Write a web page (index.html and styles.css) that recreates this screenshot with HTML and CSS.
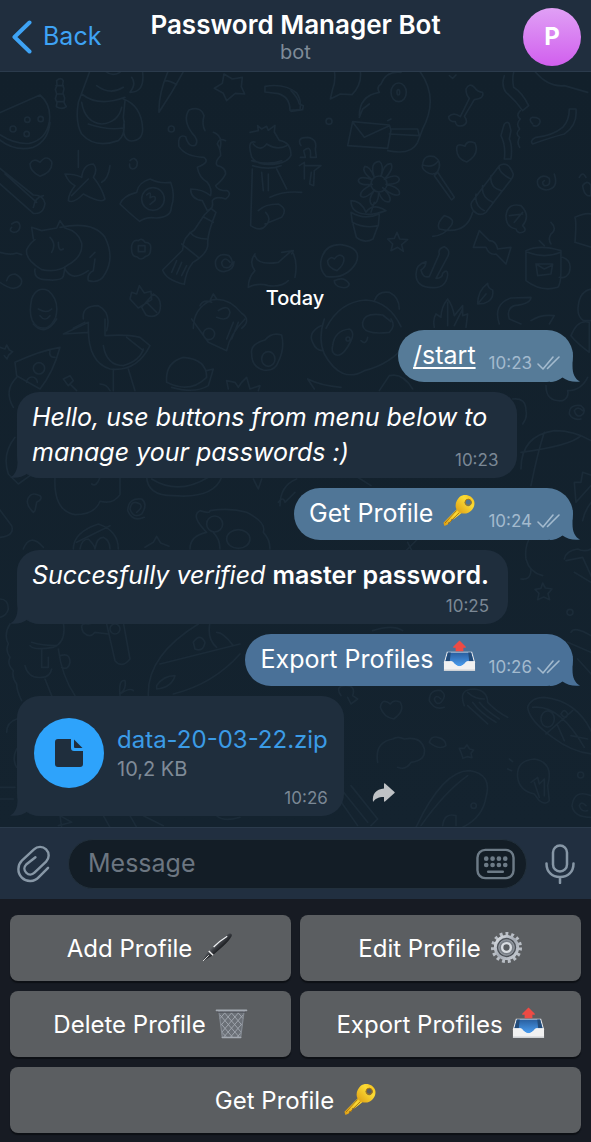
FILE: index.html
```html
<!DOCTYPE html>
<html lang="en">
<head>
<meta charset="utf-8">
<meta name="viewport" content="width=device-width, initial-scale=1">
<title>Password Manager Bot</title>
<link rel="stylesheet" href="styles.css">
</head>
<body>
<svg class="sprites" aria-hidden="true">
  <defs>
    <linearGradient id="gold" x1="1" y1="0" x2="0" y2="1"><stop offset="0" stop-color="#f5b912"/><stop offset=".35" stop-color="#fcdc35"/><stop offset="1" stop-color="#dc9a12"/></linearGradient>
    <linearGradient id="blue" x1="0" y1="0" x2="0" y2="1"><stop offset="0" stop-color="#2a5f9f"/><stop offset="1" stop-color="#4a9df0"/></linearGradient>
    <linearGradient id="steel" x1="0" y1="0" x2="1" y2="1"><stop offset="0" stop-color="#dfe3e8"/><stop offset=".5" stop-color="#a3a9b2"/><stop offset="1" stop-color="#c9ced5"/></linearGradient>
    <linearGradient id="ink" x1="0" y1="0" x2="1" y2="1"><stop offset=".3" stop-color="#8d9095"/><stop offset=".48" stop-color="#3a3d42"/><stop offset=".6" stop-color="#141619"/></linearGradient>
    <symbol id="key" viewBox="0 0 34 34">
      <path d="M16 15 1.500 29.500 2.500 33 6 31.500 6.500 29 9 29 9.500 26 12 26 21 19Z" fill="url(#gold)"/>
      <path d="M15 17 3 30M18 19 6 31" stroke="#a8700c" stroke-width="1"/>
      <path fill-rule="evenodd" d="M18 3C23-1 31 1 33 7c2 6-3 12-8 13-6 1-11-3-11-8 0-4 2-7 4-9Zm6.500 3.500a3.500 3.500 0 1 0 5 0 3.500 3.500 0 0 0-5 0Z" fill="url(#gold)"/>
      <circle cx="27" cy="8.500" r="3.200" fill="none" stroke="#b27a0c" stroke-width="1"/>
    </symbol>
    <symbol id="tray" viewBox="0 0 34 34">
      <path d="M4 12h26l3 11v9H1v-9Z" fill="#e9eaec"/>
      <path d="M5 13h24l2.500 9H25c-2 0-3 5-8 5s-6-5-8-5H2.500Z" fill="url(#blue)"/>
      <path d="M5 13h3l-1 9H2.500ZM29 13h-3l1 9h4.500Z" fill="#234b78"/>
      <path d="M1 22h7c3 0 4 5 9 5s6-5 9-5h7v10H1Z" fill="#f1f1f1"/>
      <path d="M1 30.500h32V32H1Z" fill="#cfd2d6"/>
      <path d="M17 .500 23.500 7q.5 1-.5 1H21v3.500h-8V8h-2q-1 0-.5-1Z" fill="#ee4b44"/>
    </symbol>
    <symbol id="pen" viewBox="0 0 34 34">
      <path d="M1.500 31.500 6 23C12 16 21 7 28 3c3-1.500 4.500.5 3.500 2.500-3 6-13 14-20 20Z" fill="url(#ink)"/>
      <path d="M8 20.500 12.500 25" stroke="#eee" stroke-width="1.500"/>
      <path d="m2 31 6-6" stroke="#ddd" stroke-width="1"/>
      <path d="M13 16.500C18 11.500 23 8 27 5.500" fill="none" stroke="#eef0f2" stroke-width="1.300"/>
    </symbol>
    <symbol id="gear" viewBox="0 0 34 34">
      <circle cx="17" cy="17" r="14" fill="none" stroke="#b9bec5" stroke-width="4" stroke-dasharray="2.900 2.965"/>
      <circle cx="17" cy="17" r="11.500" fill="#4c5158" stroke="url(#steel)" stroke-width="3"/>
      <circle cx="17" cy="17" r="8" fill="#7a8088" stroke="#9da3ab" stroke-width="1"/>
      <circle cx="17" cy="17" r="4.500" fill="#595d61" stroke="#d9dde2" stroke-width="2.500"/>
    </symbol>
    <symbol id="bin" viewBox="0 0 34 34">
      <path d="M4 4h26l-3.500 27q-9.500 2-19 0Z" fill="#6b7077"/>
      <path d="m5 8 20 23M9 5l18 21M16 5l12 14M23 5l6 7M6 17l12 14M7 26l5 5M29 8 9 31M25 5 7 26M18 5 6 19M11 5l-6 7M28 17 16 31M27 26l-4 5" stroke="#a4aab2" stroke-width=".9"/>
      <path d="M4 4 7.500 31M30 4l-3.500 27" stroke="#858b93" stroke-width="1.200"/>
      <path d="M1.500 3.500h31M7.500 31.500h19" stroke="#a3a9b1" stroke-width="1.600" stroke-linecap="round"/>
      <path d="M2 5.500h30" stroke="#50545b" stroke-width="1"/>
    </symbol>
    <symbol id="ticks" viewBox="0 0 23 14">
      <path d="m1 8 5 5L16 1M10.500 12.500 22 1" fill="none" stroke="currentColor" stroke-width="1.600" stroke-linecap="round" stroke-linejoin="round"/>
    </symbol>
    <symbol id="tail" viewBox="0 0 30 30">
      <path d="M22.500 0v14c0 8 2.500 13 7.500 15.500-6 1-13-.5-17.500-4C8 28.500 4 30 0 30V0Z" fill="currentColor"/>
    </symbol>
  </defs>
</svg>

<div class="app">
  <header class="topbar">
    <button class="back" type="button">
      <svg class="back-icon" viewBox="0 0 20 34" aria-hidden="true"><path d="M17.500 2.500 2.500 17l15 14.500" fill="none" stroke="currentColor" stroke-width="4" stroke-linecap="round" stroke-linejoin="round"/></svg>
      Back
    </button>
    <div class="peer">
      <h1 class="peer-name">Password Manager Bot</h1>
      <p class="peer-status">bot</p>
    </div>
    <button class="avatar" type="button" aria-label="Open profile">P</button>
  </header>

  <main class="chat">
    <svg class="wallpaper" viewBox="0 72 591 756" preserveAspectRatio="xMidYMax slice" aria-hidden="true">
      <g transform="translate(0 70) scale(.3333)">
        <path d="M-20 140 120 78q35 30 28 80-10 55-60 65-50 5-108-40M-10 205q50 45 110 30 45-20 50-75M30 180a9 9 0 1 0 18 0 9 9 0 1 0-18 0M72 195a8 8 0 1 0 16 0 8 8 0 1 0-16 0M74 152a8 8 0 1 0 16 0 8 8 0 1 0-16 0M114 150a8 8 0 1 0 16 0 8 8 0 1 0-16 0"/>
        <path d="M170 35q12-12 20 0l-2 12 4 12-3 14 5 14-2 14 7 12q-12 10-30 0l2-12-5-12 4-14-4-14 5-12ZM168 50h22M170 75h20M170 98h22"/>
        <path d="M270 5 235 100q-10 60 10 95 40 45 110 20 25-20 15-70l5-50M245 75q50 40 130 10M245 100q10 60 60 65 50-5 60-50M370 90q55 20 58 90 0 35-35 36-30-5-20-60M265 165q60 20 105 12M290 50q40 30 80 5M395 25q15 20-5 45 45 0 38-60M315 5q20 20 45 5"/>
        <path d="M505 5q-30 70-28 125 40-60 72-120M495 35q15 0 35 12M680 95l-10-22-27-15 24-15 5-28 25 15 30-5-3 28 10 22-28-2ZM795 52q60-10 95 20 15 20 10 50l-30 2q0-40-35-50l-40-5Z"/>
        <path d="M615 185q-10-20-3-45-10-30-45-17-20 30 10 70 20 20 10 35-20 10-30-25-25-10-20 30 20 30 75 32 20 15-20 30 5 30 30 45 15 20 10 40-25-20-60-20 0 30 35 35l15 30q20-5 15-30 10-15 40-5 20-15 5-25-30 0-35-15 20-15 30-35 0-20-25-25-10-10 10-30 0-20-10-35 5-20 25-10M640 190q30 10 20 50"/>
        <path d="M505 180a9 9 0 1 0 18 0 9 9 0 1 0-18 0M90 285q10-20 30-5 20-25 35-2 5 30-35 44-30-15-30-37ZM0 298l100 80q30 0 35 25-5 35-35 30L-5 340M15 315l95 85M100 415q5-30 30-35M235 245v50M195 315q30 0 50 10 5-40 35-40 15 15 0 40 25 30 35 65-10 15-65-15-30 30-45 20 0-20 20-45-20-10-30-35ZM330 290q-5 40-25 50M215 380l50-50"/>
        <path d="M390 275q15-15 22 5 0 20-15 20-10-2-8-15M360 405q10-25 50-35 5-30 40-40 30 15 62 10 15 40 2 75 0 30-45 32-30-5-50 10-20-15-59-52ZM425 390a34 34 0 1 0 68 0 34 34 0 1 0-68 0M440 378q15-15 10 8 20-10 15 8l-15 12"/>
        <path d="M100 510l-5-35 30 10 45-8 10-22 15 22q40 10 50 45 5 40-40 65-30 25-80 15-50-30-45-60 10-20 25-30M180 475q100-20 135 30 30 60 0 110-15 30-50 20-5-20 15-30l5-35M195 600q20 40 70 5M105 600q-5 30 30 32 50 5 55-10l5-25M150 505q20 20 5 45M175 520q0 30 15 20M270 565l15-15"/>
        <path d="M35 465q20-15 25 5 0 20-20 20-15-5-5-15M395 530q5-20 20-15 10-10 20 5 20 0 17 20 0 20-15 22-15 15-25 2-20 0-17-34ZM415 530h20v18h-20ZM648 430l-15-12-20 20-30 45q-35 20-35 60l-60 60q10 30 65 43 5-40 25-65 50-30 45-60 0-30 25-91ZM612 445l28 15M570 490q15 20 50 20M545 525l50 40M530 575l-15 35M545 580l-15 35M560 590l-15 30"/>
        <path d="M690 580q-15-20-25 0 0 20 22 15 20-15 0-35-30-10-40 15-5 30 25 33 30-5 30-30M0 550q30 10 50 2l15 5M0 640q40 30 60 10 15-20-15-35-20 0-25 20M95 690q15-40 50-25 35 30 22 80-20 45-55 28-30-20-17-83ZM115 720q25 15 40 0M120 740q15 20 30 0M250 750q-5-40 45-40 40 20 25 75M220 778l35-18M390 690l5-20 15 5 8-25 15 22 20-5 2 25-40 25ZM425 715l35-40q30 15 18 55-15 20-40 8ZM440 700l30 30"/>
        <path d="M750 190l25-5-2-15 12 10 15-8 5 12 20-15-2 20 15 25q35 5 35 45-10 20-40 25-60 10-78-20-15-50 10-45M760 225q20 25 40 0 30 20 60 5M755 275q50 15 90 0M758 290q50 15 85 0M757 300l-5 170q30 20 45 0 20-20 0-40M830 300l30 60M785 310l5 55M805 315v50M775 425q20-20 60-20 30 15 10 40l-50 20M810 385q40-20 95-15"/>
        <path d="M765 555q-20 25 0 50-20 20-20 50 30-15 60-5 40 5 60-15M765 560q10 30 70 20l40-35q20 30 10 80M845 550l35-5-5 10M580 778q0-60 55-85 50-10 90 40 30 20 0 45M630 695l10-20 10 15M655 725q30-20 35 5-5 30-40 15M600 710q10-20 35-10"/>
      </g>
      <g transform="translate(291 70) scale(.3333)">
        <path d="M0 65q20 20 25 40l12 5-2 12-35 5M130 5q5 30-5 55l-7 30 30-15 35 2q30-30 25-70M265 70q-10-15 5-25 15-40 60-35M385 5q60 80 10 175l-15 40q-20 40-90 25M205 140q0-60 60-70M300 70a23 28 0 1 0 46 0 23 28 0 1 0-46 0M318 70a4 8 0 1 0 8 0 4 8 0 1 0-8 0M205 145l10-25 20-15M185 158l110 10 5 15-10 55-120-8ZM185 160l35 45 75-35M300 180l80 0 5 20-90-5M290 155l10-5"/>
        <path d="M525 60q10-20 25-5 10 15 25 15 5 20-25 22l-30 50q15 20-5 28-20 5-22-12-20 0-20-15 15-15 35 0l27-55q-10-10-10-28ZM640 20q-10 30 5 50 30 25 50 55l18-15q-20-40-45-55-5-25 0-45M835 120h20q5 50-35 75-40 10-95 30-10-10 10-20 50-5 80-30 20-20 20-55ZM725 165q-15-15 0-20 25 0 22 15-5 15-20 10M730 5q40 50 90 45l70 20M475 20l10 8 10-10"/>
        <path d="M640 165q10-10 15 0l5 20-5 25q10 20 5 60h-20q5-40-10-70 5-20 10-35ZM688 125q-15 15 0 25-15 15-2 30-15 15 0 25-10 15 0 30M30 230q-15-25 20-25 30 5 23 35l3 25H58q5-40-20-20l5 20H28M25 290l15-10v50M40 290h50l-20 15-2 45-12-5 5-35M105 157a9 9 0 1 0 18 0 9 9 0 1 0-18 0M497 240q0-20 25-8 5-20 30-10 15 35-25 57-30-10-30-39Z"/>
        <path d="M240 345a24 24 0 1 0 48 0 24 24 0 1 0-48 0M250 325q-15-45 15-48 15 10 5 45 10-40 30-38 10 15-20 47 40-20 45 0 0 15-40 15 45 10 40 30-15 10-50-20 30 30 20 42-20 5-32-28 0 35-20 38-15-15 8-45-30 30-42 18-5-15 35-35-40 5-42-12 5-15 42-2-35-25-22-40 15 0 28 33ZM250 400l-10 30M180 395q30 0 45 35 20-30 60-5-40 15-65 10-40-5-40-40ZM180 430q40 25 85 5l-3 35q-40 10-78-10ZM186 465l10 40q25 20 50 5l15-40"/>
        <path d="M395 285q5-30 35-22 25 15 10 45-15 15-35 0-15-10-10-23ZM395 288q30 10 45-10M430 320l10-10 50 75-8 8Z"/>
        <path d="M625 290q25-15 40 20 5 10-5 22L585 430q-20 15-38-5-10-15-5-25ZM625 290q-5 20 35 40M600 320q-5 35 30 45M575 350q-5 35 30 50M555 375q-5 35 25 50M545 430q-20 70-100 50-10-15 15-40 35 10 20 30-20 30-55 32M645 440q5-40 45-30 30 30 5 60 15 15 0 20-15 5-20-10-30-5-30-40ZM655 440l40-5M670 460l25-30"/>
        <path d="M790 315q15 45-25 48-30-5-25-30 15-20 35-5 5 25-15 22-10-10 0-15M865 325q10-20 20 0M875 350q15-20 25 0v30q-20 5-25-30ZM852 520q5-60 0-75 30-15 50-10M852 520l50 15M705 545q40-20 105 0v60q0 40-10 50-50 15-95-20ZM710 550q50 20 100 0M735 585h50l-5 30-40 5ZM735 585l25 15 25-12M815 565q30 10 20 45-10 20-30 15M745 515l15 15M780 460q20 20 0 35-10 15 0 30"/>
        <path d="M565 485l30 30q20 0 25 25l40-5-15 50-30-30q-20 5-30-20l-38 0ZM318 490l8 20 24 2-18 15 5 20-17-12-20 10 5-20-15-15 20-2ZM90 575q10-50 60-48 65 10 45 55-30 50-90 40-20-20-15-47ZM110 575q10-15 20-5 15-20 28-5 5 20-20 40-30-10-28-30ZM130 635q30-15 45 10-5 15-25 10-20-5-20-20"/>
        <path d="M445 555q-5-15 15-22 20 10 10 30l-35 65q20 0 20-15 15-15 15 5-5 40-45 38-50 0-50-40 0-30 30-38 0 15-15 25 5 25 25 20ZM560 705q0-40 30-62 0 15 15 20 5 30-25 40ZM560 705l25-30M430 775q-5-25 5-40l15 10q0-30 20-55 15 20 20 50l25-30v30l15-5-5 40M470 700v70M490 770l25-50M625 765q-20-60 35-78l60-2q0 20-50 25-25 10-15 40l35 15M720 755q30-20 70-15l-15 25M105 778q40-80 120-85 70 5 105 80M215 760q5-30 60-22l25 20M250 695q10-30 45-25 30 15 30 50M862 710q5-45 40-50M862 710q-5 30 15 45h25"/>
      </g>
      <g transform="translate(0 320) scale(.3333)">
        <path d="M190 45l75-35 0 30ZM265 30q0 100 65 120 80 10 120-70l-30-25q-40-10-105-5V0M310 80q10 60 60 60 50-15 60-50M380 55l50 40M340 150v65M385 150l20 65M300 195q20 0 30 20M100 15q35 40 70-15M0 85l15 5 5-12 8 15 10 5-12 10-5 12-8-10"/>
        <path d="M180 85q-60 10-135 45l5 40 70 40q40-50 60-125ZM100 148a17 17 0 1 0 34 0 17 17 0 1 0-34 0M150 95q-5 20 15 20M80 190a16 16 0 0 1 32 0M50 175q-40 40-10 90M190 180l20-10 10 15-15 15ZM210 195l20 20"/>
        <path d="M575 0l50 70 55 25q10-50 55-95M610 45a17 17 0 1 0 34 0 17 17 0 1 0-34 0M700 10l-20 50M715 10l-20 50M755 105q-5-30 40-42 20-25 50-15 10 40-10 80-10 30-45 25-35-10-35-48ZM785 120a20 22 0 1 0 40 0 20 22 0 1 0-40 0M500 190q-5-60 50-75 70 5 70 60-50 50-120 15ZM620 155l20-5-15 50q-40 25-110 5M685 210l-5-25 25 5 10 15 10-15 15-15 10 35 30-10-5 15"/>
        <path d="M45 355q-40 50-20 110l30 30 35-25M165 475q-5 100 60 112 60 0 75-40 40 10 60-20l0-50M300 475q-10 30-25 20M440 470q0 60 80 60 120 10 145-55M455 480q80 50 170-5M105 575l5-25q20-10 10-20-20-10-30 0-20 20 10 50ZM410 580q20-15 10-25-25-15-30 15 10 30 35 15 20-30 0-45-40-5-42 35 15 35 50 20"/>
        <path d="M220 690q0-50 75-75 60 20 60 75M240 690q5-30 25-30 20 20 20 30M285 690q5-35 25-35 20 10 20 35M230 670l100-50M70 690q20-50 60-5M435 685l25-15 10-18 12 20 25 10M-10 560l45 60q10 30-35 35"/>
        <path d="M570 690q0-40 50-50-50-50-20-65 30 10 30 0 60-10 110 5 60 30 50 60 20 20 20 50M620 615a24 24 0 1 0 48 0 24 24 0 1 0-48 0M680 660a35 28 0 1 0 70 0 35 28 0 1 0-70 0M640 640q20 20 20 50M760 480l15 30 10-30M840 560q0-60 50-80M835 550q15-20 20 0l30-30"/>
      </g>
      <g transform="translate(291 320) scale(.3333)">
        <path d="M100 0q-20 60 0 105 50 90 120 50 80-20 125-80M215 10q-5 40 80 30 20-20 5-40M90 20q-40 20-25 50 10 25 30 25M125 80q5-45 50-50 20 10 0 45-25 45-45 30-10-10-5-25ZM165 60a6 6 0 1 0 12 0 6 6 0 1 0-12 0M210 65q15 15 20-10M50 180q40 20 100 25M50 180l20 30M265 215l30-45q40-10 70 40"/>
        <path d="M765 200q0 50 50 45 20-10 15-30 40 0 60-40M840 50q20-50 55-40v90q-40-30-55-50M875 275q-15-15-25 0 5 20 20 15 20-15 0-30-35-5-35 25 10 20 35 15M665 240q40-5 40 35 5 20-10 40M690 450q0-100 100-115 60 0 110 30M690 400q150-20 180-50M760 340q-20 60-40 160M850 490l20 0 5-30 30 10M850 490l5 60 45-50M875 605q5-30 30-60"/>
        <path d="M820 720q5-25 40-30 20 10 40 0M825 725l50-10 30 65M720 650q-20 30-15 70 10 40 50 50M340 700l40-40M350 670l20 40M200 475l40 25"/>
      </g>
      <g transform="translate(0 570) scale(.3333)">
        <path d="M0 90q25 0 25 30-5 20-25 25M30 165q-20 30-5 60-10 20 5 40-10 20 10 40-5 20 10 40 0 20 15 50M190 160q10 60-30 75-60 10-70-5M95 220q30 10 75 10M125 240v55h20v-30M75 290q10 40 50 35 25 0 30-25M135 330l20 50M175 240q10 80 50 140M180 260q30-10 30 20-5 25-25 15M250 190q-15-30 15-25l20-5q15 5 30 0M250 190q20 20 35 0l40 5M330 180a15 15 0 1 0 30 0 15 15 0 1 0-30 0M320 165l25 110q20 25 45-5l-20-110"/>
        <path d="M445 380q-5-120 150-215M480 285l240-60M520 375q120-30 200-120M470 350q20-30 55-30-10 35-55 40ZM580 220q20-30 35 0-5 30-30 20ZM630 160q-10 50 20 75M650 190q20 0 50 40M360 380q-5-50 15-45 5 25-15 40 30-20 40-10M20 490q0-30 30-40M50 540q-15 30 0 55M0 655h45M0 690h40M180 740l5 35M180 740l35 20-40 10M310 740l20 35M390 740l20 35M430 740l60 30M650 740q20 20 70 5"/>
      </g>
      <g transform="translate(291 570) scale(.3333)">
        <path d="M690 30q30 5 30-30M850 10l50 30M755 42l8 15 20 3-12 14 5 18-18-8-18 8 4-19-12-12 18-3ZM828 130a9 9 0 1 0 18 0 9 9 0 1 0-18 0M840 190q10-20 60 10M830 220l70 30M860 270l45 50M245 185q60-20 90 0M150 380q-20-30 15-30 30 0 20 30l15 10-20 15-10-20"/>
        <path d="M268 415q5-30 30-10 10-15 30-5 15 25-20 50-30-5-40-35ZM450 390q-15-15-20 0 5 20 20 10 20-20 0-35-35-5-35 30 15 30 45 20M520 410q-20-50 30-50 40 5 40 40 30 30 60 45M530 370q20 20 50 20M530 410l60 55M545 400q20 30 70 60M565 400q20 25 60 50"/>
        <path d="M710 415q10-30 50-30 100 10 145 110v60q-60-5-120-50-70-50-75-90ZM725 415q80-10 155 120M765 495l80-70M750 450a18 22 0 1 0 40 0 18 22 0 1 0-40 0M810 435q10-20 20 0-5 20-20 0M840 500l50 10M800 470l20 45"/>
        <path d="M260 580q-10-60 45-70 15-10 35 0 50-10 60 30 5 35-40 40-15 25-40 15M415 520q5-20 25-15 25 5 25 25-20 15-50-10ZM510 550l-5-12 15 0 8-10 8 12 12 3-8 10 3 13-15-3-12 5ZM375 775q80-170 160-170 70 10 50 80-10 60-70 90M390 770q70-100 140-150M540 710a8 8 0 1 0 16 0 8 8 0 1 0-16 0M455 770q5-40 40-30v30"/>
        <path d="M680 625q-5-50 50-55 60 10 40 80l5 45q-10 15-30 0l-15-20q-45-10-50-50ZM720 640l20-15 5 20 15-15v50M730 640l15 45M650 600l12 5M655 570l10 8M860 618a9 9 0 1 0 18 0 9 9 0 1 0-18 0M885 710q-15-15-20 0 5 20 25 15M900 680q-50-20-57 30 5 35 57 35M130 670l70 100M150 660l80 100M180 650l80 100-20 20"/>
      </g>
    </svg>

    <p class="day">Today</p>
    <ol class="messages">
      <li class="bubble out tone-1">
        <a class="text command" href="#start">/start</a>
        <span class="meta"><time>10:23</time><svg class="ticks" role="img" aria-label="Read"><use href="#ticks"/></svg></span>
        <svg class="tail" aria-hidden="true"><use href="#tail"/></svg>
      </li>
      <li class="bubble in flowing">
        <em>Hello, use buttons from menu below to manage your passwords :)</em>
        <span class="meta"><time>10:23</time></span>
        <svg class="tail" aria-hidden="true"><use href="#tail"/></svg>
      </li>
      <li class="bubble out tone-2">
        <p class="text">Get Profile<svg class="emoji" role="img" aria-label="key"><use href="#key"/></svg></p>
        <span class="meta"><time>10:24</time><svg class="ticks" role="img" aria-label="Read"><use href="#ticks"/></svg></span>
        <svg class="tail" aria-hidden="true"><use href="#tail"/></svg>
      </li>
      <li class="bubble in">
        <p class="text"><em>Succesfully verified</em> <strong>master password.</strong></p>
        <span class="meta"><time>10:25</time></span>
        <svg class="tail" aria-hidden="true"><use href="#tail"/></svg>
      </li>
      <li class="bubble out tone-3">
        <p class="text">Export Profiles<svg class="emoji" role="img" aria-label="outbox"><use href="#tray"/></svg></p>
        <span class="meta"><time>10:26</time><svg class="ticks" role="img" aria-label="Read"><use href="#ticks"/></svg></span>
        <svg class="tail" aria-hidden="true"><use href="#tail"/></svg>
      </li>
      <li class="file-row">
        <div class="bubble in file">
          <span class="file-icon"><svg viewBox="0 0 30 30" aria-hidden="true"><path d="M4 1h13v9q0 3 3 3h9v13q0 3-3 3H4q-3 0-3-3V4q0-3 3-3Z" fill="currentColor"/><path d="M20 1.500 28.500 10H21q-1 0-1-1Z" fill="currentColor"/></svg></span>
          <div class="file-info">
            <a class="file-name" href="#data">data-20-03-22.zip</a>
            <span class="file-size">10,2 KB</span>
          </div>
          <span class="meta"><time>10:26</time></span>
          <svg class="tail" aria-hidden="true"><use href="#tail"/></svg>
        </div>
        <button class="share" type="button" aria-label="Forward">
          <svg viewBox="0 0 23 20" aria-hidden="true"><path d="M12 1q0-1 1-.500l9.500 8.500q.5.500 0 1L13 18.500q-1 .5-1-.5v-4C6 14 3 16 1 19 0 11 4 6 12 5.500Z" fill="currentColor"/></svg>
        </button>
      </li>
    </ol>
  </main>

  <form class="composer">
    <button class="tool" type="button" aria-label="Attach">
      <svg class="clip" viewBox="0 0 34 38" aria-hidden="true"><path d="M32 23 22.500 32.500C18 37.500 10 38 5 33S.500 20 5 15.500L17.500 4C21 .500 26.500.500 30 4s3.500 9 0 12.500L18 28c-2.500 2.500-6 2.500-8.500 0s-2.500-6 0-8.500L19 12" fill="none" stroke="currentColor" stroke-width="2.500" stroke-linecap="round"/></svg>
    </button>
    <div class="field">
      <input class="field-input" type="text" placeholder="Message" aria-label="Message">
      <button class="tool" type="button" aria-label="Bot keyboard">
        <svg class="keys" viewBox="0 0 40 32" aria-hidden="true"><rect x="1.500" y="1.500" width="37" height="29" rx="8" fill="none" stroke="currentColor" stroke-width="2.500"/><path d="M10.500 10.500h.01M17 10.500h.01M23.500 10.500h.01M30 10.500h.01M10.500 17h.01M17 17h.01M23.500 17h.01M30 17h.01" stroke="currentColor" stroke-width="4.800" stroke-linecap="round"/><path d="M12.500 24h15" stroke="currentColor" stroke-width="2.500" stroke-linecap="round"/></svg>
      </button>
    </div>
    <button class="tool" type="button" aria-label="Record voice message">
      <svg class="mic" viewBox="0 0 30 40" aria-hidden="true"><rect x="8" y="1.500" width="14" height="26" rx="7" fill="none" stroke="currentColor" stroke-width="2.500"/><path d="M1.500 19.500C1.500 28 7 33 15 33s13.500-5 13.500-13.500M15 33v6" fill="none" stroke="currentColor" stroke-width="2.500" stroke-linecap="round"/></svg>
    </button>
  </form>

  <nav class="bot-keys" aria-label="Bot commands">
    <button class="bot-key" type="button">Add Profile<svg class="emoji" aria-hidden="true"><use href="#pen"/></svg></button>
    <button class="bot-key" type="button">Edit Profile<svg class="emoji" aria-hidden="true"><use href="#gear"/></svg></button>
    <button class="bot-key" type="button">Delete Profile<svg class="emoji" aria-hidden="true"><use href="#bin"/></svg></button>
    <button class="bot-key" type="button">Export Profiles<svg class="emoji" aria-hidden="true"><use href="#tray"/></svg></button>
    <button class="bot-key wide" type="button">Get Profile<svg class="emoji" aria-hidden="true"><use href="#key"/></svg></button>
  </nav>
</div>
</body>
</html>
```
FILE: styles.css
```css
* { box-sizing: border-box; }

body, h1, p, ol { margin: 0; padding: 0; }

body {
  background: #171b23;
  color: #fff;
  font: 25px/35px Inter, "Noto Sans", sans-serif;
}

button {
  padding: 0;
  border: 0;
  background: none;
  color: inherit;
  font: inherit;
  cursor: pointer;
}

svg { display: block; }

.sprites {
  position: absolute;
  width: 0;
  height: 0;
}

.app {
  display: flex;
  flex-direction: column;
  min-height: 100vh;
}

/* Top bar */
.topbar {
  display: grid;
  grid-template-columns: 1fr auto 1fr;
  align-items: center;
  height: 72px;
  padding: 2px 10px 0;
  background: #202e3e;
  border-bottom: 1px solid #2b3b4c;
}

.back {
  display: flex;
  align-items: center;
  gap: 11px;
  justify-self: start;
  padding-left: 2px;
  color: #3ea3f5;
}

.back-icon { width: 20px; height: 34px; }

.peer { text-align: center; }

.peer-name {
  font-size: 26px;
  font-weight: 600;
  line-height: 31px;
}

.peer-status {
  color: #7f8b98;
  font-size: 20px;
  line-height: 24px;
}

.avatar {
  justify-self: end;
  width: 58px;
  height: 58px;
  border-radius: 50%;
  background: linear-gradient(#e0a0f5, #d15fee);
  font-size: 24px;
  font-weight: 700;
}

/* Conversation */
.chat {
  position: relative;
  isolation: isolate;
  display: flex;
  flex: 1;
  flex-direction: column;
  justify-content: flex-end;
  padding: 0 18px 11px 17px;
  overflow: hidden;
  background: linear-gradient(#12202b, #14232f);
}

.wallpaper {
  position: absolute;
  inset: 0;
  z-index: -1;
  width: 100%;
  height: 100%;
  fill: none;
  stroke: #1b2b38;
  stroke-width: 5;
  stroke-linecap: round;
  stroke-linejoin: round;
}

.day {
  margin-bottom: 20px;
  font-size: 20px;
  font-weight: 500;
  line-height: 24px;
  text-align: center;
}

.messages {
  display: flex;
  flex-direction: column;
  gap: 10px;
  list-style: none;
}

.bubble {
  position: relative;
  isolation: isolate;
  max-width: 90%;
  background: var(--tone);
}

.tone-1 { --tone: #567b98; }
.tone-2 { --tone: #507697; }
.tone-3 { --tone: #4a7198; }

.out {
  display: flex;
  align-items: flex-end;
  align-self: flex-end;
  gap: 13px;
  padding: 8px 13px 9px 15px;
  border-radius: 26px;
}

.in {
  --tone: #1f2e3d;
  display: grid;
  row-gap: 3px;
  align-self: flex-start;
  padding: 8px 19px 8px 15px;
  border-radius: 22px;
}

/* The time sits on the last line of text when there is room for it */
.flowing { display: flow-root; }

.flowing > .meta {
  float: right;
  margin-top: 15px;
}

.command {
  color: inherit;
  text-decoration-thickness: 2px;
  text-underline-offset: 3px;
}

strong { font-weight: 600; }

.meta {
  display: flex;
  align-items: center;
  align-self: end;
  justify-self: end;
  gap: 5px;
  color: #7b8895;
  font-size: 17px;
  line-height: 20px;
}

.out .meta { color: #a3bace; }

.ticks { width: 23px; height: 14px; }

.tail {
  position: absolute;
  right: -7px;
  bottom: 0;
  z-index: -1;
  width: 30px;
  height: 30px;
  color: var(--tone);
}

.in .tail {
  right: auto;
  left: -7px;
  transform: scaleX(-1);
}

.emoji {
  display: inline-block;
  width: 33px;
  height: 33px;
  margin-left: 9px;
  vertical-align: -7px;
}

.text .emoji {
  margin-top: -4px;
  margin-bottom: -4px;
  vertical-align: -1px;
}

.file-row {
  display: flex;
  align-items: flex-end;
  gap: 28px;
}

.file {
  grid-template-columns: auto auto;
  column-gap: 13px;
  row-gap: 0;
  padding: 22px 16px 8px 17px;
  align-items: start;
}

.file > .meta { grid-area: 2 / 2; }

.file-icon {
  display: grid;
  place-items: center;
  width: 70px;
  height: 70px;
  border-radius: 50%;
  background: #2ea3fb;
  color: #1f2e3d;
}

.file-icon svg { width: 30px; height: 30px; }

.file-info { display: flex; flex-direction: column; padding-top: 5px; }

.file-name {
  color: #3b9be6;
  font-size: 24px;
  line-height: 34px;
  text-decoration: none;
}

.file-size {
  color: #7f8b98;
  font-size: 20px;
  line-height: 24px;
}

.share {
  margin-bottom: 13px;
  color: #bfc2c5;
}

.share svg { width: 23px; height: 20px; }

/* Message composer */
.composer {
  display: flex;
  align-items: center;
  gap: 18px;
  height: 72px;
  padding: 0 18px 0 17px;
  border-top: 1px solid #2b3b4c;
  background: #212f40;
}

.tool { color: #8797a6; }

.clip { width: 33px; height: 38px; }
.keys { width: 39px; height: 32px; }
.mic { width: 30px; height: 40px; }

.field {
  display: flex;
  flex: 1;
  align-items: center;
  height: 50px;
  padding: 0 11px 0 19px;
  border: 1px solid #22303c;
  border-radius: 25px;
  background: #131d26;
}

.field .tool { color: #6d7b87; }

.field-input {
  flex: 1;
  min-width: 0;
  padding: 0;
  border: 0;
  outline: 0;
  background: none;
  color: #fff;
  font: inherit;
}

.field-input::placeholder { color: #6c7681; opacity: 1; }

/* Reply keyboard */
.bot-keys {
  display: grid;
  grid-template-columns: 1fr 1fr;
  gap: 10px 9px;
  padding: 16px 10px 9px;
  background: #171b23;
}

.bot-key {
  height: 66px;
  border-radius: 8px;
  background: #5b5e61;
  box-shadow: 0 2px 1px #0d1015;
  font-size: 24px;
}

.wide { grid-column: 1 / -1; }
```
